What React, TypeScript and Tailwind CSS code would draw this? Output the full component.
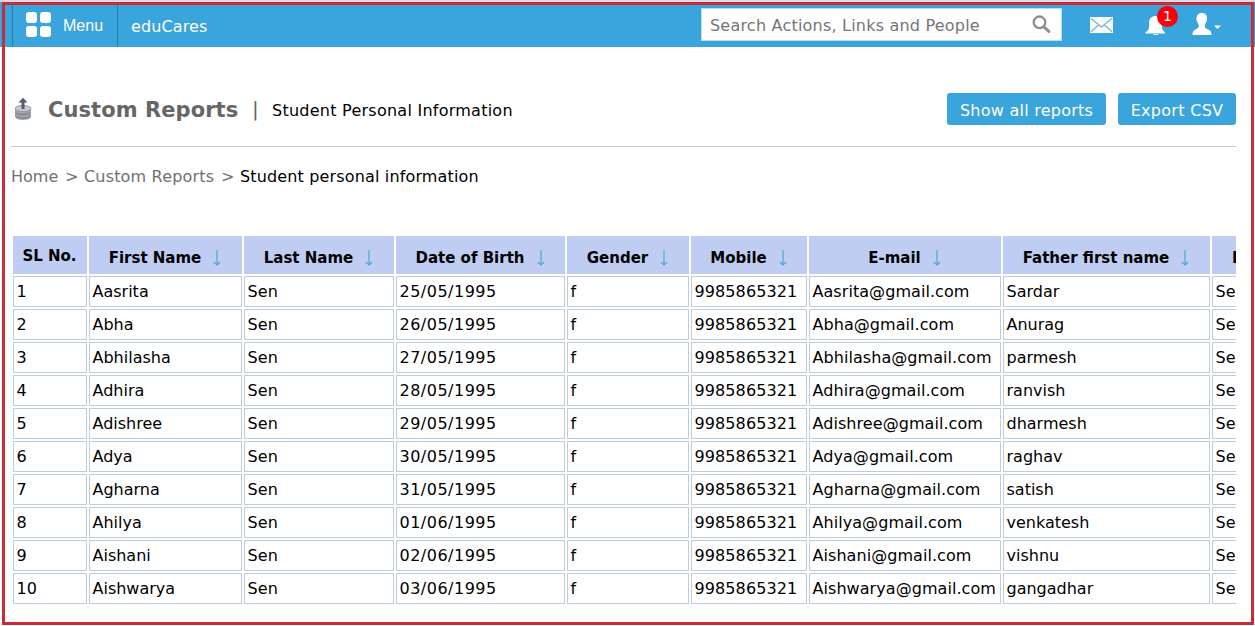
const names = [
  ["Aasrita", "25/05/1995", "Sardar"],
  ["Abha", "26/05/1995", "Anurag"],
  ["Abhilasha", "27/05/1995", "parmesh"],
  ["Adhira", "28/05/1995", "ranvish"],
  ["Adishree", "29/05/1995", "dharmesh"],
  ["Adya", "30/05/1995", "raghav"],
  ["Agharna", "31/05/1995", "satish"],
  ["Ahilya", "01/06/1995", "venkatesh"],
  ["Aishani", "02/06/1995", "vishnu"],
  ["Aishwarya", "03/06/1995", "gangadhar"],
];

const headers = [
  "First Name",
  "Last Name",
  "Date of Birth",
  "Gender",
  "Mobile",
  "E-mail",
  "Father first name",
];

const columns =
  "grid w-[1400px] grid-cols-[74px_153px_150px_169px_122px_116px_192px_207px_180px] gap-x-[2px]";

function SortArrow() {
  return (
    <svg width="8" height="16" viewBox="0 0 8 16" fill="none" stroke="#4fa6dc" className="ml-[12px] shrink-0">
      <path d="M4 0v14.5M.8 12l3.2 3 3.2-3" strokeWidth="1.2" />
    </svg>
  );
}

function TopBar() {
  return (
    <header className="flex h-[47px] border-t-2 border-[#dcd9e8] bg-[#3aa4dc] text-white">
      <div className="ml-3 flex w-[106px] items-center border-x border-[#2a7cab] pl-[13px]">
        <div className="grid grid-cols-2 gap-[3px]">
          {[0, 1, 2, 3].map((n) => (
            <span key={n} className="size-[11px] rounded-[3px] bg-white" />
          ))}
        </div>
        <span className="ml-[12px] mt-[2px] font-['Liberation_Sans',sans-serif] text-[16px]">Menu</span>
      </div>
      <span className="ml-[13px] mt-[13px] w-[570px] text-[16px] leading-6 tracking-[0.12px]">eduCares</span>
      <div className="mt-[6px] flex h-[33px] w-[361px] items-center border border-[#b9dcef] bg-white pl-[8px] text-[#757575]">
        <span className="mt-[2px] w-[322px] text-[16px] leading-6 tracking-[0.21px]">Search Actions, Links and People</span>
        <svg width="20" height="20" viewBox="0 0 20 20" fill="none" stroke="#8d8d8d">
          <circle cx="7.5" cy="7.3" r="5.8" strokeWidth="2.3" />
          <path d="m12 12 4.800 4.400" strokeWidth="3" strokeLinecap="round" />
        </svg>
      </div>
      <svg className="ml-[28px] mt-[15px]" width="23" height="17" viewBox="0 0 23 17">
        <path d="M0 0h23v16H0z" fill="#f8fcff" />
        <path d="m1 1.500 10.500 8.500 10.500-8.500M1 14.800l7.500-6.800M22 14.800l-7.500-6.800" fill="none" stroke="#83b1ca" strokeWidth="1.3" />
      </svg>
      <div className="relative ml-[32px] mt-[14px] h-5 w-[23px]">
        <svg width="23" height="20" viewBox="0 0 23 20" fill="#fff">
          <path d="M10.500 0C6.500 0 4 3 4 7v4c0 2.500-1.500 4-3.500 5.500v1h19.500v-1C18.500 15 17 13.500 17 11V7c0-4-2-7-6.500-7ZM8 18h5.500c-.5 1.500-5 1.500-5.500 0Z" />
        </svg>
        <span className="absolute -top-[10px] left-[12px] flex size-[21px] items-center justify-center rounded-full bg-[#fb0007] text-[14px]">
          1
        </span>
      </div>
      <svg className="ml-[24px] mt-[11px]" width="31" height="23" viewBox="0 0 31 23" fill="#fff">
        <path d="M9.500 0C6.300 0 4.500 2 4.500 5c0 2 .3 3.200 1 4.500.5 1 1.200 1.700 1.200 3 0 2.500-1 3-3.200 3.900C1.500 17.400.7 18 .5 22h19c-.2-4-1-4.600-3.500-5.600-2.200-.9-3.200-1.400-3.200-3.900 0-1.300.7-2 1.200-3 .7-1.300 1-2.500 1-4.500 0-3-1.800-5-5.500-5Z" />
        <path d="M22 12.500h7L25.500 16z" />
      </svg>
    </header>
  );
}

function ReportIcon() {
  return (
    <svg width="20" height="24" viewBox="0 0 20 24">
      <path d="M2 11.500v8c0 4.500 16 4.500 16 0v-8z" fill="#a0a3aa" />
      <ellipse cx="10" cy="11.500" rx="8" ry="3" fill="#c7c9cd" stroke="#989ba3" />
      <path d="M2.500 15.300c1.500 3 13.500 3 15 0M2.500 19c1.500 3 13.500 3 15 0" fill="none" stroke="#757985" />
      <path d="m10 .8 4.500 4.700h-3v6.500h-3V5.500h-3z" fill="#555b6c" />
    </svg>
  );
}

export default function App() {
  return (
    <div className="relative h-[626px] w-[1255px] overflow-hidden bg-white font-['DejaVu_Sans',sans-serif] text-[16px] text-black">
      <TopBar />
      <main className="ml-[11px] w-[1225px]">
        <div className="flex h-[100px] items-center border-b border-[#c8c8c8] pt-[25px]">
          <div className="ml-[2px] w-[35px]"><ReportIcon /></div>
          <h1 className="mt-[3px] w-[204px] whitespace-nowrap text-[21px] font-bold tracking-[0.07px] text-[#666]">Custom Reports</h1>
          <span className="w-[20px] text-[20px] text-[#666]">|</span>
          <span className="mt-[4px] text-[16px] tracking-[0.25px]">Student Personal Information</span>
          <button className="ml-auto h-8 w-[159px] rounded-[3px] bg-[#3aa4dc] pt-[3px] text-[16px] tracking-[0.25px] text-white">
            Show all reports
          </button>
          <button className="ml-3 h-8 w-[118px] rounded-[3px] bg-[#3aa4dc] pt-[3px] text-[16px] tracking-[0.3px] text-white">
            Export CSV
          </button>
        </div>
        <nav className="mt-[18px] flex h-6 items-center text-[16px] text-[#707070]">
          <span className="w-[54px]">Home</span>
          <span className="w-[19px]">&gt;</span>
          <span className="w-[137px] tracking-[0.17px]">Custom Reports</span>
          <span className="w-[19px]">&gt;</span>
          <span className="tracking-[0.15px] text-black">Student personal information</span>
        </nav>
        <section className="ml-[2px] mt-[47px] overflow-hidden">
          <div className={columns + " h-[38px] text-[15px] font-bold"}>
            <div className="flex items-center justify-center bg-[#bfcdf2] pr-[1px] pt-[2px]">SL No.</div>
            {headers.map((h) => (
              <div key={h} className="flex items-center justify-center whitespace-nowrap bg-[#bfcdf2] pr-[1px] pt-[6px]">
                {h}
                <SortArrow />
              </div>
            ))}
            <div className="flex items-center whitespace-nowrap bg-[#bfcdf2] pl-[20px] pt-[6px]">Father last name</div>
          </div>
          {names.map(([name, dob, father], i) => (
            <div key={name} className={columns + " mt-[2px] h-[31px]"}>
              {[String(i + 1), name, "Sen", dob, "f", "9985865321", name + "@gmail.com", father, "Sen"].map((v, j) => (
                <div
                  key={j}
                  className={
                    "flex items-center whitespace-nowrap border border-[#bdcddb] pl-[2.500px] " +
                    (j === 3 ? "tracking-[0.5px]" : j === 5 ? "tracking-[0.1px]" : j === 6 ? "tracking-[0.06px]" : j === 2 ? "tracking-[0.1px]" : "")
                  }
                >
                  {v}
                </div>
              ))}
            </div>
          ))}
        </section>
      </main>
      <div className="pointer-events-none absolute left-[2px] top-[2px] h-[623px] w-[1252px] border-[3px] border-[#c92c35]" />
    </div>
  );
}
